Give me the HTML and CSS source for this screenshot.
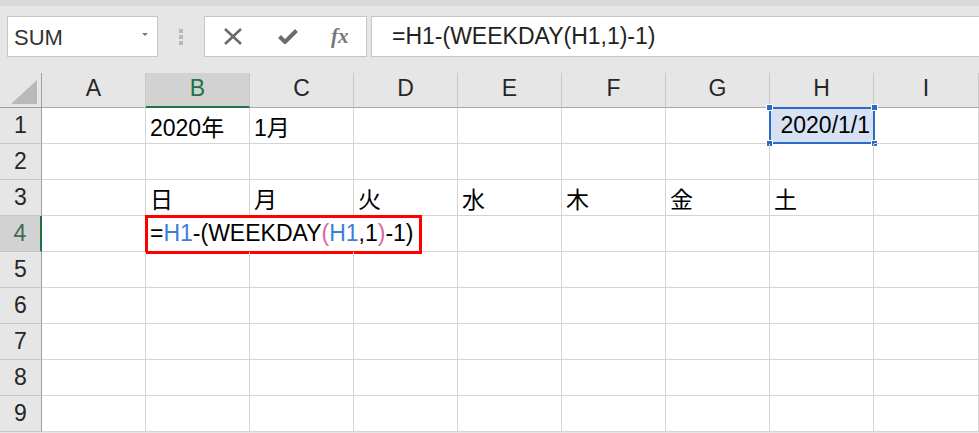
FILE: index.html
```html
<!DOCTYPE html>
<html lang="ja">
<head>
    <meta charset="UTF-8">
    <title>WEEKDAY</title>
    <link rel="stylesheet" href="styles.css">
</head>
<body>
<div class="topbar">
    <div class="namebox">
        <span>SUM</span>
        <span class="caret"></span>
    </div>
    <div class="grip"><i></i><i></i><i></i></div>
    <div class="fbuttons">
        <svg width="18" height="17" viewBox="0 0 18 17"><path d="M1 1 L17 16 M17 1 L1 16" stroke="#6b6b6b" stroke-width="2.6" fill="none"/></svg>
        <svg width="20" height="15" viewBox="0 0 20 15"><path d="M1.5 7.5 L7 13 L18.5 1.5" stroke="#6b6b6b" stroke-width="4" fill="none"/></svg>
        <span class="fx">fx</span>
    </div>
    <div class="formula">=H1-(WEEKDAY(H1,1)-1)</div>
</div>

<div class="sheet">
    <div class="corner"><svg width="30" height="26" viewBox="0 0 30 26"><polygon points="28,1 28,25 2,25" fill="#b9b9b9"/></svg></div>
    <div class="ch">A</div>
    <div class="ch active">B</div>
    <div class="ch">C</div>
    <div class="ch">D</div>
    <div class="ch">E</div>
    <div class="ch">F</div>
    <div class="ch">G</div>
    <div class="ch">H</div>
    <div class="ch">I</div>

    <div class="rh">1</div>
    <div class="c"></div>
    <div class="c">2020年</div>
    <div class="c">1月</div>
    <div class="c"></div>
    <div class="c"></div>
    <div class="c"></div>
    <div class="c"></div>
    <div class="c sel">2020/1/1<b class="h tl"></b><b class="h tr"></b><b class="h bl"></b><b class="h br"></b></div>
    <div class="c"></div>

    <div class="rh">2</div>
    <div class="c"></div><div class="c"></div><div class="c"></div><div class="c"></div><div class="c"></div><div class="c"></div><div class="c"></div><div class="c"></div><div class="c"></div>

    <div class="rh">3</div>
    <div class="c"></div>
    <div class="c">日</div>
    <div class="c">月</div>
    <div class="c">火</div>
    <div class="c">水</div>
    <div class="c">木</div>
    <div class="c">金</div>
    <div class="c">土</div>
    <div class="c"></div>

    <div class="rh active">4</div>
    <div class="c"></div>
    <div class="c edit">=<span class="ref">H1</span>-(WEEKDAY<span class="par">(</span><span class="ref">H1</span>,1<span class="par">)</span>-1)</div>
    <div class="c"></div><div class="c"></div><div class="c"></div><div class="c"></div><div class="c"></div>

    <div class="rh">5</div>
    <div class="c"></div><div class="c"></div><div class="c"></div><div class="c"></div><div class="c"></div><div class="c"></div><div class="c"></div><div class="c"></div><div class="c"></div>

    <div class="rh">6</div>
    <div class="c"></div><div class="c"></div><div class="c"></div><div class="c"></div><div class="c"></div><div class="c"></div><div class="c"></div><div class="c"></div><div class="c"></div>

    <div class="rh">7</div>
    <div class="c"></div><div class="c"></div><div class="c"></div><div class="c"></div><div class="c"></div><div class="c"></div><div class="c"></div><div class="c"></div><div class="c"></div>

    <div class="rh">8</div>
    <div class="c"></div><div class="c"></div><div class="c"></div><div class="c"></div><div class="c"></div><div class="c"></div><div class="c"></div><div class="c"></div><div class="c"></div>

    <div class="rh">9</div>
    <div class="c"></div><div class="c"></div><div class="c"></div><div class="c"></div><div class="c"></div><div class="c"></div><div class="c"></div><div class="c"></div><div class="c"></div>
</div>
</body>
</html>
```

FILE: styles.css
```css
body {
    margin: 0;
    background-color: #e6e6e6;
    font-family: "Liberation Sans", "Noto Sans CJK JP", sans-serif;
    font-size: 23px;
    color: #000;
    overflow: hidden;
}

.topbar {
    height: 73px;
    box-sizing: border-box;
    border-top: 6px solid #d9d9d9;
    padding-top: 10px;
    display: flex;
    align-items: flex-start;
}

.namebox {
    margin-left: 7px;
    width: 151px;
    height: 41px;
    box-sizing: border-box;
    background: #fff;
    border: 1px solid #c6c6c6;
    display: flex;
    align-items: center;
    justify-content: space-between;
    padding: 2px 9px 0 6px;
    font-size: 22px;
    color: #333;
}
.caret {
    width: 0;
    height: 0;
    border-left: 3px solid transparent;
    border-right: 3px solid transparent;
    border-top: 3px solid #777;
    margin-bottom: 6px;
}

.grip {
    width: 46px;
    height: 41px;
    display: flex;
    flex-direction: column;
    align-items: center;
    justify-content: center;
    gap: 2px;
}
.grip i {
    width: 4px;
    height: 4px;
    background: #b8b8b8;
}

.fbuttons {
    width: 163px;
    height: 41px;
    box-sizing: border-box;
    background: #fff;
    border: 1px solid #c6c6c6;
    display: flex;
    align-items: center;
    padding-left: 19px;
    gap: 36px;
}
.fx {
    font-family: "Liberation Serif", serif;
    font-style: italic;
    font-weight: bold;
    font-size: 21px;
    color: #777;
    margin-left: -3px;
}

.formula {
    flex: 1;
    margin-left: 4px;
    margin-right: -2px;
    height: 41px;
    box-sizing: border-box;
    background: #fff;
    border: 1px solid #c6c6c6;
    display: flex;
    align-items: center;
    padding-left: 20px;
    color: #222;
}

.sheet {
    display: grid;
    grid-template-columns: 42px repeat(8, 104px) 105px;
    grid-template-rows: 35px repeat(9, 36px);
    background: #fff;
}

.corner {
    background: #e6e6e6;
    border-right: 1px solid #9e9e9e;
    border-bottom: 1px solid #9e9e9e;
    display: flex;
    align-items: flex-end;
    justify-content: flex-end;
    padding: 0 2px 2px 0;
}

.ch {
    background: #e6e6e6;
    border-right: 1px solid #c8c8c8;
    border-bottom: 1px solid #a8a8a8;
    display: flex;
    align-items: center;
    justify-content: center;
    padding-bottom: 3px;
    color: #262626;
}
.ch.active {
    background: #d2d2d2;
    color: #217346;
    border-bottom: 2px solid #217346;
}

.rh {
    background: #e6e6e6;
    border-right: 1px solid #9e9e9e;
    border-bottom: 1px solid #c4c4c4;
    display: flex;
    align-items: center;
    justify-content: center;
    color: #262626;
}
.rh.active {
    background: #d2d2d2;
    color: #3f6b57;
    border-right: 2px solid #217346;
}

.c {
    border-right: 1px solid #d4d4d4;
    border-bottom: 1px solid #d4d4d4;
    display: flex;
    align-items: center;
    padding-left: 4px;
    white-space: nowrap;
    position: relative;
}

.sel {
    background: #d6e1f3;
    justify-content: flex-end;
    padding-right: 3px;
}
.sel::before {
    content: "";
    position: absolute;
    left: -1px;
    top: -1px;
    right: -2px;
    bottom: -1px;
    border: 2px solid #2b6bc4;
}
.h {
    position: absolute;
    width: 5px;
    height: 5px;
    background: #2b6bc4;
    border: 1px solid #fff;
}
.h.tl { left: -4px; top: -4px; }
.h.tr { right: -5px; top: -4px; }
.h.bl { left: -4px; bottom: -4px; }
.h.br { right: -5px; bottom: -4px; }

.edit {
    grid-column: span 3;
}
.edit::after {
    content: "";
    position: absolute;
    left: -1px;
    top: -1px;
    width: 277px;
    height: 39px;
    box-sizing: border-box;
    border: 3px solid #ff0000;
}
.ref { color: #3b7fd9; }
.par { color: #d9669a; }
```
